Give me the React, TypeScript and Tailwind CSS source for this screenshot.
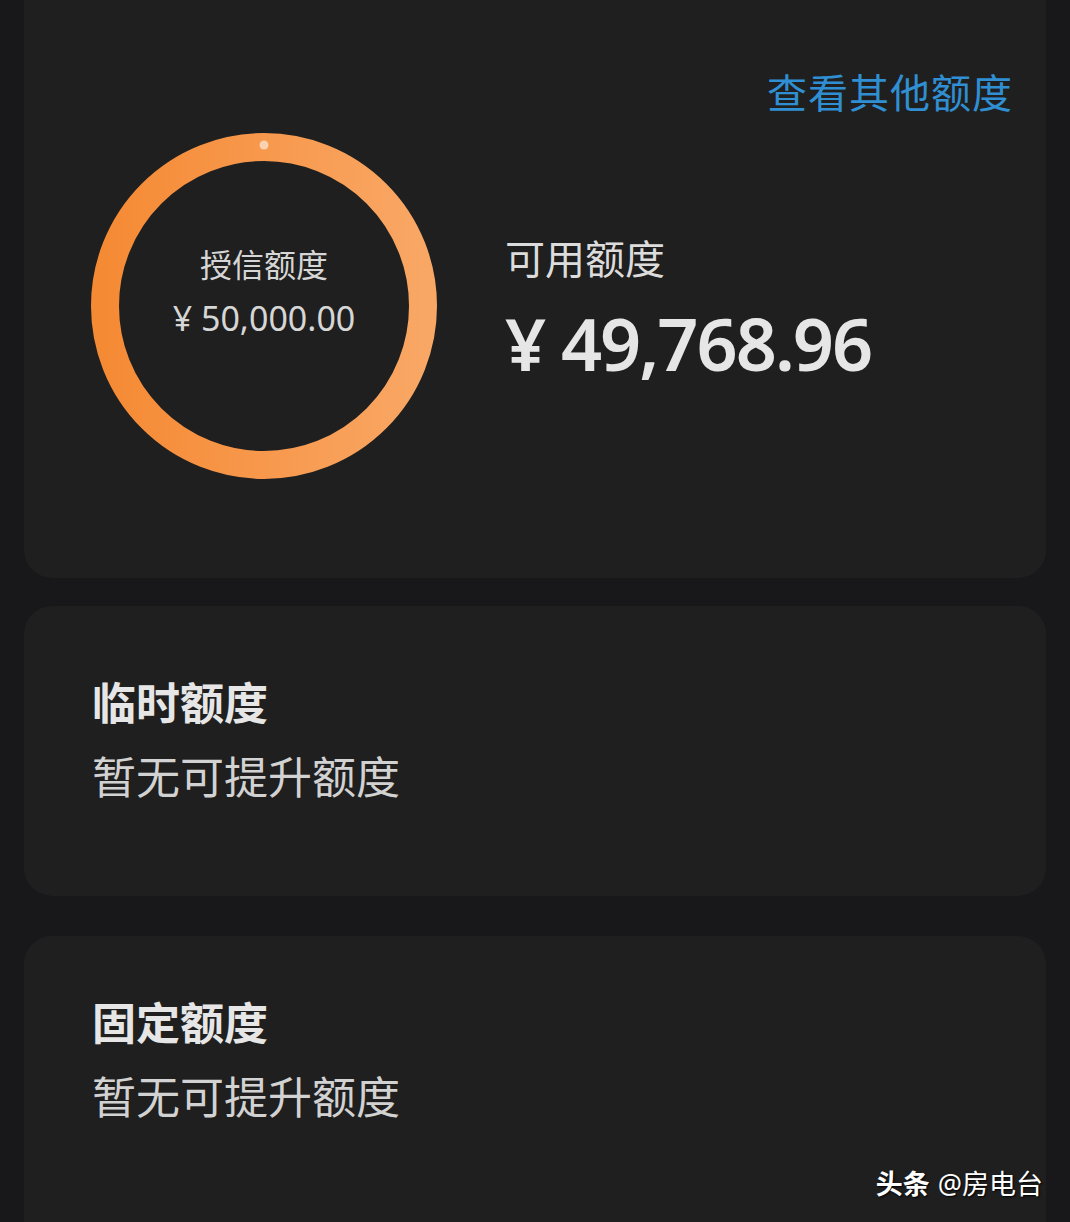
import React from 'react';

const CJK = '"Noto Sans", "Noto Sans CJK SC", sans-serif';

const Ring: React.FC = () => (
  <div className="relative w-[348px] h-[348px] shrink-0">
    <svg width="348" height="348" viewBox="0 0 348 348" className="absolute inset-0">
      <defs>
        <linearGradient id="ringGrad" x1="0" y1="0" x2="1" y2="0">
          <stop offset="0%" stopColor="#f58a34" />
          <stop offset="100%" stopColor="#f9a765" />
        </linearGradient>
      </defs>
      <circle cx="174" cy="174" r="159" fill="none" stroke="url(#ringGrad)" strokeWidth="28" />
      <circle cx="174" cy="13" r="4.5" fill="#fbd2b0" />
    </svg>
    <div className="absolute inset-0 flex flex-col items-center justify-center text-[#d6d6d6]">
      <div className="text-[32px] leading-none mt-[-28px]">授信额度</div>
      <div className="text-[34px] leading-none mt-[20px]">¥ 50,000.00</div>
    </div>
  </div>
);

const QuotaCard: React.FC<{ title: string; desc: string; className?: string }> = ({ title, desc, className }) => (
  <div className={`bg-[#1f1f1f] rounded-[28px] px-[68px] ${className ?? ''}`}>
    <div className="text-[44px] leading-none font-bold text-[#e6e6e6]">{title}</div>
    <div className="text-[44px] leading-none text-[#d2d2d2] mt-[30px]">{desc}</div>
  </div>
);

const App: React.FC = () => {
  return (
    <div className="w-[1070px] h-[1222px] overflow-hidden bg-[#18181b] px-[24px] relative" style={{ fontFamily: CJK }}>
      <div className="bg-[#1f1f1f] rounded-b-[28px] h-[578px] flex flex-col">
        <div className="flex justify-end pr-[33px] pt-[73px]">
          <span className="text-[40px] leading-none text-[#2f8fd2] tracking-[1px]">查看其他额度</span>
        </div>
        <div className="flex items-center pl-[66px] mt-[19px]">
          <Ring />
          <div className="ml-[67px] mt-[6px] flex flex-col">
            <div className="text-[40px] leading-none text-[#dcdcdc]">可用额度</div>
            <div className="text-[72px] leading-none font-semibold text-[#e6e6e6] mt-[28px] tracking-[-2px]">¥ 49,768.96</div>
          </div>
        </div>
      </div>

      <QuotaCard title="临时额度" desc="暂无可提升额度" className="mt-[28px] h-[290px] pt-[75px]" />
      <QuotaCard title="固定额度" desc="暂无可提升额度" className="mt-[40px] h-[320px] pt-[65px]" />

      <div className="absolute right-[27px] bottom-[25px] flex items-center text-white text-[27px] leading-none [text-shadow:1px_1px_2px_#000]">
        <span className="font-bold">头条</span>
        <span className="ml-[8px]">@房电台</span>
      </div>
    </div>
  );
};

export default App;
